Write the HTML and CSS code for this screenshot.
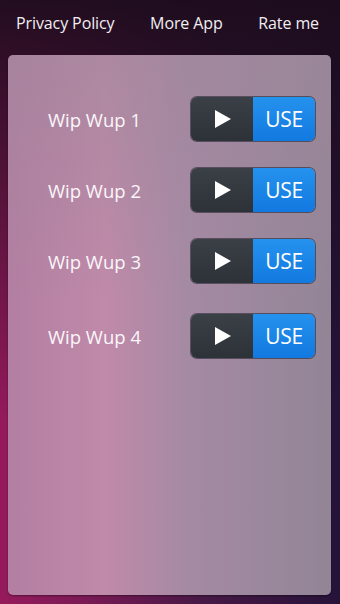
FILE: index.html
```html
<!DOCTYPE html>
<html lang="en">
<head>
    <meta charset="UTF-8">
    <meta name="viewport" content="width=device-width, initial-scale=1.0">
    <title>Wip Wup</title>
    <link rel="stylesheet" href="styles.css">
</head>
<body>
    <div class="topbar">
        <a class="top-link">Privacy Policy</a>
        <a class="top-link">More App</a>
        <a class="top-link">Rate me</a>
    </div>

    <div class="panel">
        <div class="row">
            <span class="label">Wip Wup 1</span>
            <div class="sound-btn">
                <button class="play"><span class="tri"></span></button>
                <button class="use">USE</button>
            </div>
        </div>
        <div class="row">
            <span class="label">Wip Wup 2</span>
            <div class="sound-btn">
                <button class="play"><span class="tri"></span></button>
                <button class="use">USE</button>
            </div>
        </div>
        <div class="row">
            <span class="label">Wip Wup 3</span>
            <div class="sound-btn">
                <button class="play"><span class="tri"></span></button>
                <button class="use">USE</button>
            </div>
        </div>
        <div class="row last">
            <span class="label">Wip Wup 4</span>
            <div class="sound-btn">
                <button class="play"><span class="tri"></span></button>
                <button class="use">USE</button>
            </div>
        </div>
    </div>
</body>
</html>
```

FILE: styles.css
```css
* {
    margin: 0;
    padding: 0;
    box-sizing: border-box;
}

html, body {
    height: 100%;
}

body {
    font-family: 'Open Sans', 'Noto Sans', sans-serif;
    color: #fff;
    background:
        linear-gradient(180deg, rgba(28, 12, 28, 0.95) 0%, rgba(28, 12, 28, 0.55) 30%, rgba(28, 12, 28, 0) 70%),
        linear-gradient(90deg, #951a5c 0%, #7a1a55 25%, #461845 60%, #26133a 100%);
    display: flex;
    flex-direction: column;
    overflow: hidden;
}

.topbar {
    height: 55px;
    display: flex;
    align-items: flex-start;
    justify-content: space-between;
    padding: 12px 21px 0 16px;
}

.top-link {
    font-size: 16px;
    color: #f2eef2;
    letter-spacing: -0.1px;
}

.panel {
    margin: 0 9px 9px 8px;
    height: 540px;
    border-radius: 5px;
    background:
        linear-gradient(180deg, rgba(160, 135, 155, 0.6) 0%, rgba(160, 135, 155, 0) 45%),
        linear-gradient(90deg, #b27ea2 0%, #c08aa9 30%, #a58aa4 55%, #928596 100%);
    box-shadow: 0 1px 2px rgba(0, 0, 0, 0.4);
    padding: 42px 16px 0 0;
    display: flex;
    flex-direction: column;
    gap: 27px;
}

.row {
    display: flex;
    align-items: center;
    justify-content: space-between;
    height: 44px;
}

.row.last {
    margin-top: 4px;
}

.label {
    flex: 1;
    text-align: center;
    padding-right: 10px;
    font-size: 18.5px;
    color: #fbf6fa;
}

.sound-btn {
    display: flex;
    height: 44px;
    width: 124px;
    border-radius: 6px;
    overflow: hidden;
    box-shadow: 0 0 0 1px rgba(30, 30, 40, 0.55);
}

.sound-btn button {
    border: none;
    height: 100%;
    width: 62px;
    display: flex;
    align-items: center;
    justify-content: center;
    font-family: inherit;
}

.play {
    background: linear-gradient(180deg, #3a4046 0%, #2c3237 100%);
    border-right: 1px solid #22272b;
}

.tri {
    width: 0;
    height: 0;
    border-top: 9px solid transparent;
    border-bottom: 9px solid transparent;
    border-left: 16px solid #fff;
    margin-left: 2px;
}

.use {
    background: linear-gradient(180deg, #2592ee 0%, #1279e0 100%);
    color: #fff;
    font-size: 21px;
    letter-spacing: -0.3px;
}
```
